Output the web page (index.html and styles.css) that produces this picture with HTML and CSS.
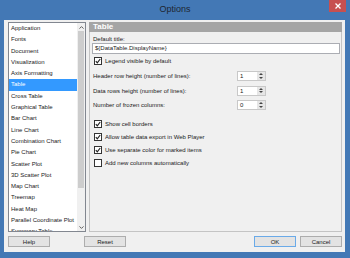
FILE: index.html
```html
<!DOCTYPE html>
<html lang="en">
<head>
  <meta charset="UTF-8" />
  <title>Options</title>
  <link rel="stylesheet" href="styles.css">
</head>
<body>
  <div class="window">
    <div class="titlebar">
      <span></span>
      <span class="title">Options</span>
      <span class="close">
        <svg width="6" height="6" viewBox="0 0 6 6"><path d="M0.5 0.5L5.5 5.5M5.5 0.5L0.5 5.5" stroke="#fff" stroke-width="1.3"/></svg>
      </span>
    </div>

    <div class="client">
      <div class="main">
        <div class="listbox">
          <ul class="items">
            <li>Application</li>
            <li>Fonts</li>
            <li>Document</li>
            <li>Visualization</li>
            <li>Axis Formatting</li>
            <li class="selected">Table</li>
            <li>Cross Table</li>
            <li>Graphical Table</li>
            <li>Bar Chart</li>
            <li>Line Chart</li>
            <li>Combination Chart</li>
            <li>Pie Chart</li>
            <li>Scatter Plot</li>
            <li>3D Scatter Plot</li>
            <li>Map Chart</li>
            <li>Treemap</li>
            <li>Heat Map</li>
            <li>Parallel Coordinate Plot</li>
            <li>Summary Table</li>
          </ul>
          <div class="scrollbar">
            <div class="arrow">
              <svg width="5" height="3" viewBox="0 0 5 3"><path d="M0.5 2.6L2.5 0.6L4.5 2.6" fill="none" stroke="#606060" stroke-width="1"/></svg>
            </div>
            <div class="track"><div class="thumb"></div></div>
            <div class="arrow">
              <svg width="5" height="3" viewBox="0 0 5 3"><path d="M0.5 0.4L2.5 2.4L4.5 0.4" fill="none" stroke="#606060" stroke-width="1"/></svg>
            </div>
          </div>
        </div>

        <div class="panel">
          <div class="panel-header">Table</div>
          <div class="panel-body">
            <div class="field-label">Default title:</div>
            <div class="textbox">${DataTable.DisplayName}</div>

            <div class="check first-check">
              <span class="box"><svg width="6" height="6" viewBox="0 0 6 6"><path d="M0.8 3.2L2.3 4.8L5.2 1" fill="none" stroke="#222" stroke-width="1.2"/></svg></span>
              Legend visible by default
            </div>

            <div class="spin-row first-spin">
              <span class="spin-label">Header row height (number of lines):</span>
              <div class="spinner"><span class="val">1</span><span class="spin-btns"><i class="up"></i><i class="down"></i></span></div>
            </div>
            <div class="spin-row">
              <span class="spin-label">Data rows height (number of lines):</span>
              <div class="spinner"><span class="val">1</span><span class="spin-btns"><i class="up"></i><i class="down"></i></span></div>
            </div>
            <div class="spin-row">
              <span class="spin-label">Number of frozen columns:</span>
              <div class="spinner"><span class="val">0</span><span class="spin-btns"><i class="up"></i><i class="down"></i></span></div>
            </div>

            <div class="check group-start">
              <span class="box"><svg width="6" height="6" viewBox="0 0 6 6"><path d="M0.8 3.2L2.3 4.8L5.2 1" fill="none" stroke="#222" stroke-width="1.2"/></svg></span>
              Show cell borders
            </div>
            <div class="check">
              <span class="box"><svg width="6" height="6" viewBox="0 0 6 6"><path d="M0.8 3.2L2.3 4.8L5.2 1" fill="none" stroke="#222" stroke-width="1.2"/></svg></span>
              Allow table data export in Web Player
            </div>
            <div class="check">
              <span class="box"><svg width="6" height="6" viewBox="0 0 6 6"><path d="M0.8 3.2L2.3 4.8L5.2 1" fill="none" stroke="#222" stroke-width="1.2"/></svg></span>
              Use separate color for marked items
            </div>
            <div class="check">
              <span class="box"></span>
              Add new columns automatically
            </div>
          </div>
        </div>
      </div>

      <div class="buttons">
        <button class="btn">Help</button>
        <button class="btn reset">Reset</button>
        <span class="spacer"></span>
        <button class="btn default">OK</button>
        <button class="btn">Cancel</button>
      </div>
    </div>
  </div>
</body>
</html>
```

FILE: styles.css
```css
body {
  margin: 0;
  font-family: "Liberation Sans", Arial, sans-serif;
  font-size: 6px;
  color: #1a1a1a;
}

.window {
  width: 350px;
  height: 258px;
  background: #4378b5;
  display: flex;
  flex-direction: column;
}

.titlebar {
  height: 20px;
  display: grid;
  grid-template-columns: 1fr auto 1fr;
  align-items: start;
}

.title {
  font-size: 9px;
  line-height: 19px;
  color: #1e2631;
}

.close {
  justify-self: end;
  margin-right: 4px;
  width: 17px;
  height: 12px;
  background: #c75050;
  display: flex;
  align-items: center;
  justify-content: center;
}

.client {
  flex: 1;
  margin: 0 5px 6px 4px;
  padding: 2px 3px 0 4px;
  background: #f0f0f0;
  display: flex;
  flex-direction: column;
}

.main {
  height: 210px;
  display: flex;
  gap: 3px;
}

/* list of categories */
.listbox {
  width: 76px;
  border: 1px solid #828790;
  background: #fff;
  display: flex;
}

.items {
  flex: 1;
  list-style: none;
  margin: 0;
  padding: 0;
  overflow: hidden;
}

.items li {
  height: 11.3px;
  line-height: 11.3px;
  padding-left: 2px;
  white-space: nowrap;
}

.items li.selected {
  background: #3399ff;
  color: #fff;
}

.scrollbar {
  width: 8px;
  background: #f0f0f0;
  display: flex;
  flex-direction: column;
}

.arrow {
  height: 8px;
  display: flex;
  align-items: center;
  justify-content: center;
}

.track {
  flex: 1;
}

.thumb {
  height: 157px;
  margin: 0 1px;
  background: #cdcdcd;
}

/* settings panel */
.panel {
  flex: 1;
  border: 1px solid #c4c4c4;
  border-top: none;
}

.panel-header {
  height: 10px;
  line-height: 10px;
  margin: 0 -1px;
  padding-left: 4px;
  background: #a5a5a5;
  color: #fff;
  font-weight: bold;
  font-size: 8px;
}

.panel-body {
  padding: 0 1px 0 3px;
}

.field-label {
  margin-top: 3px;
  line-height: 8px;
}

.textbox {
  height: 9px;
  line-height: 9px;
  margin-left: -1px;
  padding-left: 2px;
  border: 1px solid #abadb3;
  background: #fff;
}

.check {
  display: flex;
  align-items: center;
  height: 8px;
  margin-top: 5px;
}

.first-check {
  margin-top: 3px;
}

.group-start {
  margin-top: 10px;
}

.box {
  width: 6px;
  height: 6px;
  margin: 0 3px 0 1px;
  border: 1px solid #333;
  background: #fff;
  display: flex;
}

.spin-row {
  display: flex;
  align-items: center;
  height: 10px;
  margin-top: 4.5px;
}

.first-spin {
  margin-top: 6px;
}

.spin-label {
  width: 144px;
}

.spinner {
  width: 29px;
  height: 10px;
  display: flex;
  border: 1px solid #c8c8c8;
  box-sizing: border-box;
  background: #fff;
}

.val {
  flex: 1;
  padding-left: 2px;
  line-height: 8px;
}

.spin-btns {
  width: 8px;
  background: #e6e6e6;
  display: flex;
  flex-direction: column;
  align-items: center;
  justify-content: space-evenly;
}

.spin-btns i {
  width: 0;
  height: 0;
  border-left: 2px solid transparent;
  border-right: 2px solid transparent;
}

.spin-btns .up {
  border-bottom: 2px solid #444;
}

.spin-btns .down {
  border-top: 2px solid #444;
}

/* dialog buttons */
.buttons {
  display: flex;
  gap: 4px;
  margin-top: 4px;
}

.btn {
  width: 42px;
  height: 11px;
  padding: 0;
  font-family: inherit;
  font-size: 6px;
  color: #1a1a1a;
  background: #e3e3e3;
  border: 1px solid #adadad;
}

.reset {
  margin-left: 30px;
}

.spacer {
  flex: 1;
}

.default {
  border-color: #6aaae8;
}
```
